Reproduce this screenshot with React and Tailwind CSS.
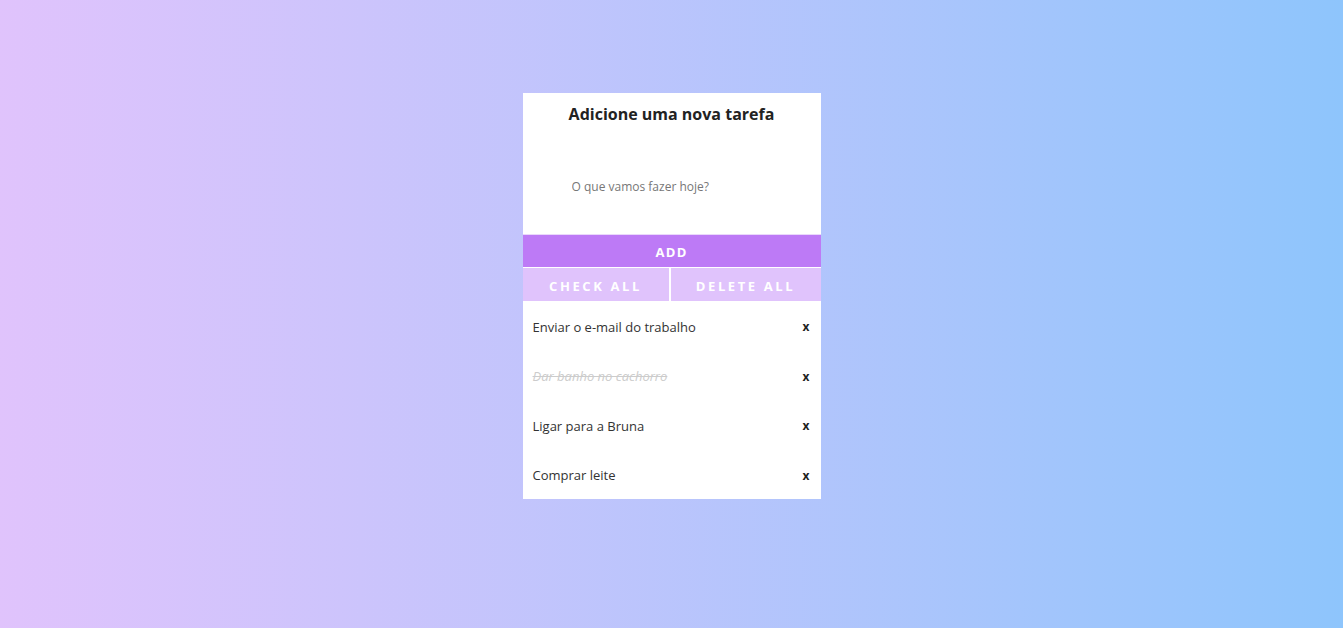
import { useState } from "react";

const initialTasks = [
	{ id: 1, text: "Enviar o e-mail do trabalho", done: false },
	{ id: 2, text: "Dar banho no cachorro", done: true },
	{ id: 3, text: "Ligar para a Bruna", done: false },
	{ id: 4, text: "Comprar leite", done: false },
];

const App = () => {
	const [tasks, setTasks] = useState(initialTasks);
	const [value, setValue] = useState("");

	const addTask = () => {
		if (!value.trim()) return;
		setTasks((prev) => [...prev, { id: Date.now(), text: value, done: false }]);
		setValue("");
	};

	const toggle = (id) =>
		setTasks((prev) =>
			prev.map((t) => (t.id === id ? { ...t, done: !t.done } : t))
		);

	const remove = (id) => setTasks((prev) => prev.filter((t) => t.id !== id));

	return (
		<div className="min-h-screen w-full flex justify-center bg-gradient-to-r from-[#e0c3fc] to-[#8ec5fc] font-['Open_Sans',sans-serif] pt-[93px]">
			<div className="w-[298px] h-fit bg-white flex flex-col">
				<h1 className="text-[16px] font-bold text-[#222] text-center pt-[10px] leading-[22px]">
					Adicione uma nova tarefa
				</h1>
				<div className="h-[109px] flex items-center pl-[49px] pr-4 pt-[14px]">
					<input
						value={value}
						onChange={(e) => setValue(e.target.value)}
						placeholder="O que vamos fazer hoje?"
						className="w-full text-[12px] text-[#444] placeholder:text-[#777] outline-none bg-transparent"
					/>
				</div>
				<button
					onClick={addTask}
					className="h-[33px] bg-[#bd7af6] text-white text-[13px] font-bold tracking-[0.1em] border-t border-[#e9d8fb] pt-[3px]"
				>
					ADD
				</button>
				<div className="flex h-[34px] border-t border-white">
					<button
						onClick={() => setTasks((p) => p.map((t) => ({ ...t, done: true })))}
						className="w-[148px] bg-[#e0c3fc] text-white text-[13px] font-bold tracking-[0.2em] border-r-2 border-white pt-[5px]"
					>
						CHECK ALL
					</button>
					<button
						onClick={() => setTasks([])}
						className="flex-1 bg-[#e0c3fc] text-white text-[13px] font-bold tracking-[0.2em] pt-[5px]"
					>
						DELETE ALL
					</button>
				</div>
				<ul className="flex flex-col">
					{tasks.map((task) => (
						<li
							key={task.id}
							className="h-[49.5px] flex items-center justify-between pl-[10px] pr-[11px] pt-[3px]"
						>
							<span
								onClick={() => toggle(task.id)}
								className={`text-[13px] cursor-pointer ${
									task.done
										? "line-through italic text-[#ccc]"
										: "text-[#333]"
								}`}
							>
								{task.text}
							</span>
							<button
								onClick={() => remove(task.id)}
								className="text-[12px] font-bold text-[#222]"
							>
								x
							</button>
						</li>
					))}
				</ul>
			</div>
		</div>
	);
};

export default App;
